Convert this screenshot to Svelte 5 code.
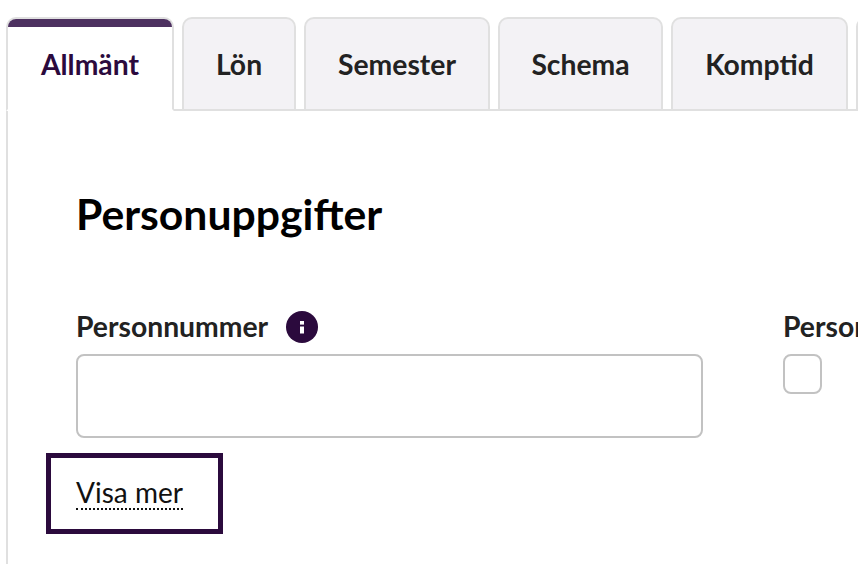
<script>
  const tabs = [
    { label: 'Allmänt', width: 168 },
    { label: 'Lön', width: 114 },
    { label: 'Semester', width: 186 },
    { label: 'Schema', width: 165 },
    { label: 'Komptid', width: 177 },
    { label: '', width: 120 }
  ];
</script>

<div class="page">
  <div class="tabs">
    {#each tabs as tab, i}
      <div class="tab" class:active={i === 0} style="flex-basis: {tab.width}px">
        <span>{tab.label}</span>
      </div>
    {/each}
  </div>
  <div class="panel">
    <h2>Personuppgifter</h2>
    <div class="fields">
      <div class="field wide">
        <div class="label">
          <span>Personnummer</span>
          <svg class="info" viewBox="0 0 32 32" width="32" height="32" aria-hidden="true">
            <circle cx="16" cy="16" r="16" fill="#2b0a3d" />
            <rect x="14" y="10" width="4" height="3.6" fill="#fff" />
            <rect x="14" y="15.5" width="4" height="7" fill="#fff" />
          </svg>
        </div>
        <div class="input"></div>
      </div>
      <div class="field">
        <div class="label"><span>Person</span></div>
        <div class="checkbox"></div>
      </div>
    </div>
    <div class="more"><span>Visa mer</span></div>
  </div>
</div>

<style>
  :global(body) {
    margin: 0;
    background: #fff;
  }
  .page {
    width: 858px;
    height: 564px;
    overflow: hidden;
    box-sizing: border-box;
    padding: 17px 0 0 6px;
    font-family: Lato, "Liberation Sans", sans-serif;
    color: #222;
  }
  .tabs {
    display: flex;
    gap: 8px;
    width: 1100px;
    height: 94px;
  }
  .tab {
    flex: 0 0 auto;
    box-sizing: border-box;
    height: 94px;
    display: flex;
    align-items: center;
    justify-content: center;
    background: #f3f2f5;
    border: 2px solid #e0e0e0;
    border-radius: 10px 10px 0 0;
    font-size: 28.3px;
    font-weight: 700;
  }
  .tab.active {
    position: relative;
    background: #fff;
    border-bottom-color: #fff;
    color: #2b0a3d;
  }
  .tab.active::before {
    content: "";
    position: absolute;
    top: 0;
    left: 0;
    right: 0;
    height: 8px;
    background: #4d3160;
    border-radius: 8px 8px 0 0;
  }
  .panel {
    box-sizing: border-box;
    height: 453px;
    border-left: 2px solid #e0e0e0;
    padding: 0 0 0 68px;
    position: relative;
  }
  .panel::before {
    content: "";
    position: absolute;
    top: -2px;
    left: 166px;
    width: 860px;
    height: 2px;
    background: #e0e0e0;
  }
  h2 {
    margin: 0;
    padding-top: 80px;
    font-size: 42.7px;
    line-height: 46px;
    font-weight: 700;
    color: #000;
  }
  .fields {
    display: flex;
    gap: 80px;
    margin-top: 71px;
    width: 1000px;
  }
  .field.wide {
    width: 627px;
  }
  .label {
    display: flex;
    align-items: center;
    gap: 18px;
    height: 36px;
    margin-bottom: 10px;
    font-size: 28.3px;
    font-weight: 700;
  }
  .info {
    margin-top: 2px;
  }
  .input {
    box-sizing: border-box;
    height: 84px;
    border: 2px solid #c2c2c2;
    border-radius: 8px;
    background: #fff;
  }
  .checkbox {
    box-sizing: border-box;
    width: 39px;
    height: 40px;
    border: 2px solid #c2c2c2;
    border-radius: 8px;
    background: #fff;
  }
  .more {
    box-sizing: border-box;
    width: 177px;
    height: 81px;
    margin: 15px 0 0 -30px;
    padding-left: 25px;
    display: flex;
    align-items: center;
    border: 5px solid #2b0a3d;
    font-size: 28px;
    color: #111;
  }
  .more span {
    border-bottom: 2px dotted #111;
    line-height: 30px;
    padding-bottom: 1px;
  }
</style>
